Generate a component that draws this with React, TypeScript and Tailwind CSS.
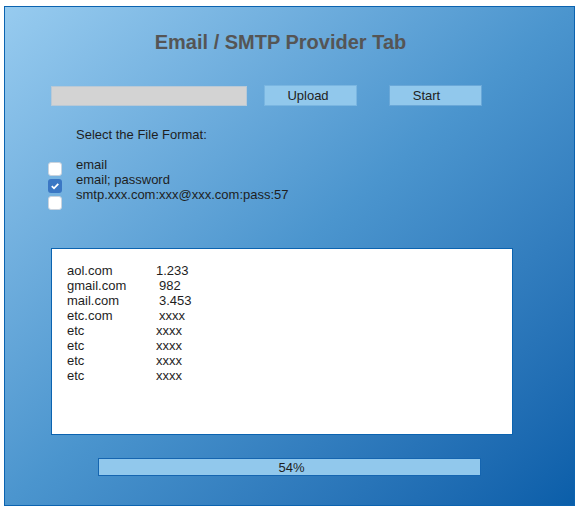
const rows: [string, string, string][] = [
  ['aol.com', '1.233', 'pl-[89px]'],
  ['gmail.com', '982', 'pl-[92px]'],
  ['mail.com', '3.453', 'pl-[92px]'],
  ['etc.com', 'xxxx', 'pl-[92px]'],
  ['etc', 'xxxx', 'pl-[89px]'],
  ['etc', 'xxxx', 'pl-[89px]'],
  ['etc', 'xxxx', 'pl-[89px]'],
  ['etc', 'xxxx', 'pl-[89px]'],
]

const formats = [
  { label: 'email', checked: false },
  { label: 'email; password', checked: true },
  { label: 'smtp.xxx.com:xxx@xxx.com:pass:57', checked: false },
]

function Check({ checked }: { checked: boolean }) {
  return checked ? (
    <div className="w-[14px] h-[14px] rounded-[3px] bg-[#3b77c4] flex items-center justify-center">
      <svg width="10" height="10" viewBox="0 0 10 10">
        <path d="M1.8 5.2 L4 7.3 L8.3 2.8" stroke="white" strokeWidth="1.8" fill="none" />
      </svg>
    </div>
  ) : (
    <div className="w-[14px] h-[14px] rounded-[3px] bg-white border border-[#c9d3de]" />
  )
}

export default function App() {
  return (
    <div
      className="w-[579px] h-[509px] bg-white pt-[6px] pl-[4px]"
      style={{ fontFamily: '"Liberation Sans", Arial, sans-serif' }}
    >
      <div className="w-[571px] h-[500px] border border-[#0b63b0] bg-gradient-to-br from-[#97cbef] via-[#4b95ce] to-[#0a5ea9] flex flex-col">
        <h1 className="text-center text-[20px] font-bold text-[#555555] mt-[23px] leading-[24px] pr-[18px]">
          Email / SMTP Provider Tab
        </h1>

        <div className="flex items-center mt-[31px] pl-[46px]">
          <div className="w-[196px] h-[20px] bg-[#d3d3d3] border border-[#b9c9d6]" />
          <button className="ml-[17px] w-[93px] h-[21px] bg-[#91c8ec] border border-[#7ab6e1] text-[13px] text-[#222] leading-none pr-[5px]">
            Upload
          </button>
          <button className="ml-[32px] w-[93px] h-[21px] bg-[#91c8ec] border border-[#6aa8d8] text-[13px] text-[#222] leading-none pr-[18px]">
            Start
          </button>
        </div>

        <div className="pl-[71px] mt-[21px] text-[13px] text-[#1e1e1e] leading-[16px]">
          Select the File Format:
        </div>

        <div className="flex mt-[14px] pl-[43px]">
          <div className="flex flex-col gap-[3px] pt-[5px]">
            {formats.map((f) => (
              <Check key={f.label} checked={f.checked} />
            ))}
          </div>
          <div className="flex flex-col ml-[14px] text-[13px] text-[#1e1e1e] leading-[15px]">
            {formats.map((f) => (
              <span key={f.label}>{f.label}</span>
            ))}
          </div>
        </div>

        <div className="ml-[46px] mt-[38px] w-[462px] h-[187px] bg-white border border-[#0b63b0] pt-[14px] pl-[15px] text-[13px] text-[#1e1e1e] leading-[15px]">
          {rows.map(([d, v, pad], i) => (
            <div key={i} className="flex">
              <span className="w-[0px] whitespace-nowrap">{d}</span>
              <span className={pad}>{v}</span>
            </div>
          ))}
        </div>

        <div className="ml-[93px] mt-[23px] w-[383px] h-[18px] bg-[#91c8ec] border border-[#1565b0] flex items-center justify-center text-[13px] text-[#1e1e1e] leading-none pl-[4px]">
          54%
        </div>
      </div>
    </div>
  )
}
